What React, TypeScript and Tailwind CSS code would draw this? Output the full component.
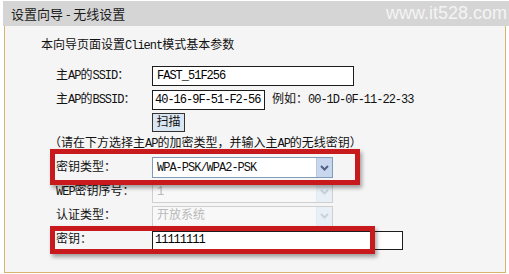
import React from 'react';

const cn = '"Liberation Mono", "Noto Sans CJK SC", monospace';

// Latin runs get tighter tracking, like the narrow bitmap font of the original page
const Mixed = ({ text }: { text: string }) => (
    <>
        {text.split(/([\x20-\x7e]+)/).map((part, i) =>
            /^[\x20-\x7e]+$/.test(part) ? (
                <span key={i} className="tracking-[-1px]">
                    {part}
                </span>
            ) : (
                <span key={i}>{part}</span>
            )
        )}
    </>
);

const Label = ({ text }: { text: string }) => (
    <div className="w-[96px] shrink-0 box-content whitespace-nowrap pl-[51px] text-[12px] text-[#111]">
        <Mixed text={text} />
    </div>
);

const Select = ({ value, disabled }: { value: string; disabled?: boolean }) => (
    <div
        className={`flex h-[21px] w-[181px] items-center border ${disabled ? 'border-[#cfcfcf] bg-[#f8f8f8]' : 'border-[#7f9db9] bg-white'}`}
    >
        <span className={`flex-1 pl-[4px] text-[12px] ${disabled ? 'text-[#b8b8b8]' : 'text-[#111]'}`}>
            <Mixed text={value} />
        </span>
        <div
            className={`flex h-[19px] w-[16px] items-center justify-center border-l ${disabled ? 'border-[#e6ebf2] bg-[#e9eff7]' : 'border-[#b9c8e0] bg-[#c9d7ee]'}`}
        >
            <svg width="9" height="6" viewBox="0 0 9 6">
                <path d="M1 1 L4.5 4.5 L8 1" fill="none" stroke={disabled ? '#c9d3e0' : '#4d6185'} strokeWidth="2" />
            </svg>
        </div>
    </div>
);

export default function App() {
    return (
        <div className="relative h-[274px] w-[509px] overflow-hidden bg-white" style={{ fontFamily: cn }}>
            <div className="ml-[3px] mt-[1px] flex h-[25px] items-center justify-between bg-[#d5d5d5] pl-[8px]">
                <span className="text-[13px] text-[#1b1b1b]" style={{ fontFamily: '"Noto Sans CJK SC", sans-serif' }}>
                    设置向导 - 无线设置
                </span>
                <span
                    className="pr-[2px] text-[18px] text-[#f4f4f4]"
                    style={{ fontFamily: '"Liberation Sans", Arial, sans-serif' }}
                >
                    www.it528.com
                </span>
            </div>
            <div className="ml-[4px] mr-[3px] h-[247px] border-x border-b border-[#d9b36c] bg-[#f5f5f5]">
                <div className="flex h-[29px] items-end pl-[36px] text-[12px] text-[#111]">
                    <Mixed text="本向导页面设置Client模式基本参数" />
                </div>
                <div className="h-[9px]" />
                <div className="flex h-[24px] items-center">
                    <Label text="主AP的SSID：" />
                    <div className="flex h-[20px] w-[202px] items-center border border-[#1c1c1c] bg-white pl-[4px] text-[12px] tracking-[-1px]">
                        FAST_51F256
                    </div>
                </div>
                <div className="flex h-[24px] items-center">
                    <Label text="主AP的BSSID：" />
                    <div className="flex h-[20px] w-[113px] items-center whitespace-nowrap border border-[#1c1c1c] bg-white pl-[2px] text-[12px] tracking-[-1px]">
                        40-16-9F-51-F2-56
                    </div>
                    <span className="ml-[7px] whitespace-nowrap text-[12px] text-[#111]">
                        <Mixed text="例如：00-1D-0F-11-22-33" />
                    </span>
                </div>
                <div className="flex h-[21px] items-center pl-[147px]">
                    <div className="flex h-[19px] w-[33px] items-center justify-center border border-[#333] bg-[#dbe6f3] text-[12px] text-[#111]">
                        扫描
                    </div>
                </div>
                <div className="flex h-[22px] items-center whitespace-nowrap pl-[44px] text-[12px] text-[#111]">
                    <Mixed text="（请在下方选择主AP的加密类型，并输入主AP的无线密钥）" />
                </div>
                <div className="flex h-[25px] items-center">
                    <Label text="密钥类型：" />
                    <Select value="WPA-PSK/WPA2-PSK" />
                </div>
                <div className="flex h-[24px] items-center">
                    <Label text="WEP密钥序号：" />
                    <Select value="1" disabled />
                </div>
                <div className="flex h-[24px] items-center">
                    <Label text="认证类型：" />
                    <Select value="开放系统" disabled />
                </div>
                <div className="flex h-[24px] items-center">
                    <Label text="密钥：" />
                    <div className="flex h-[19px] w-[251px] items-center border border-[#1c1c1c] bg-white pl-[2px] text-[12px] tracking-[-1px]">
                        11111111
                    </div>
                </div>
            </div>
            <div className="absolute left-[50px] top-[149px] h-[36px] w-[310px] border-[5px] border-[#c8191c] shadow-[2px_3px_4px_rgba(0,0,0,0.35)]" />
            <div className="absolute left-[50px] top-[226px] h-[28px] w-[325px] border-[5px] border-[#c8191c] shadow-[2px_3px_4px_rgba(0,0,0,0.35)]" />
        </div>
    );
}
